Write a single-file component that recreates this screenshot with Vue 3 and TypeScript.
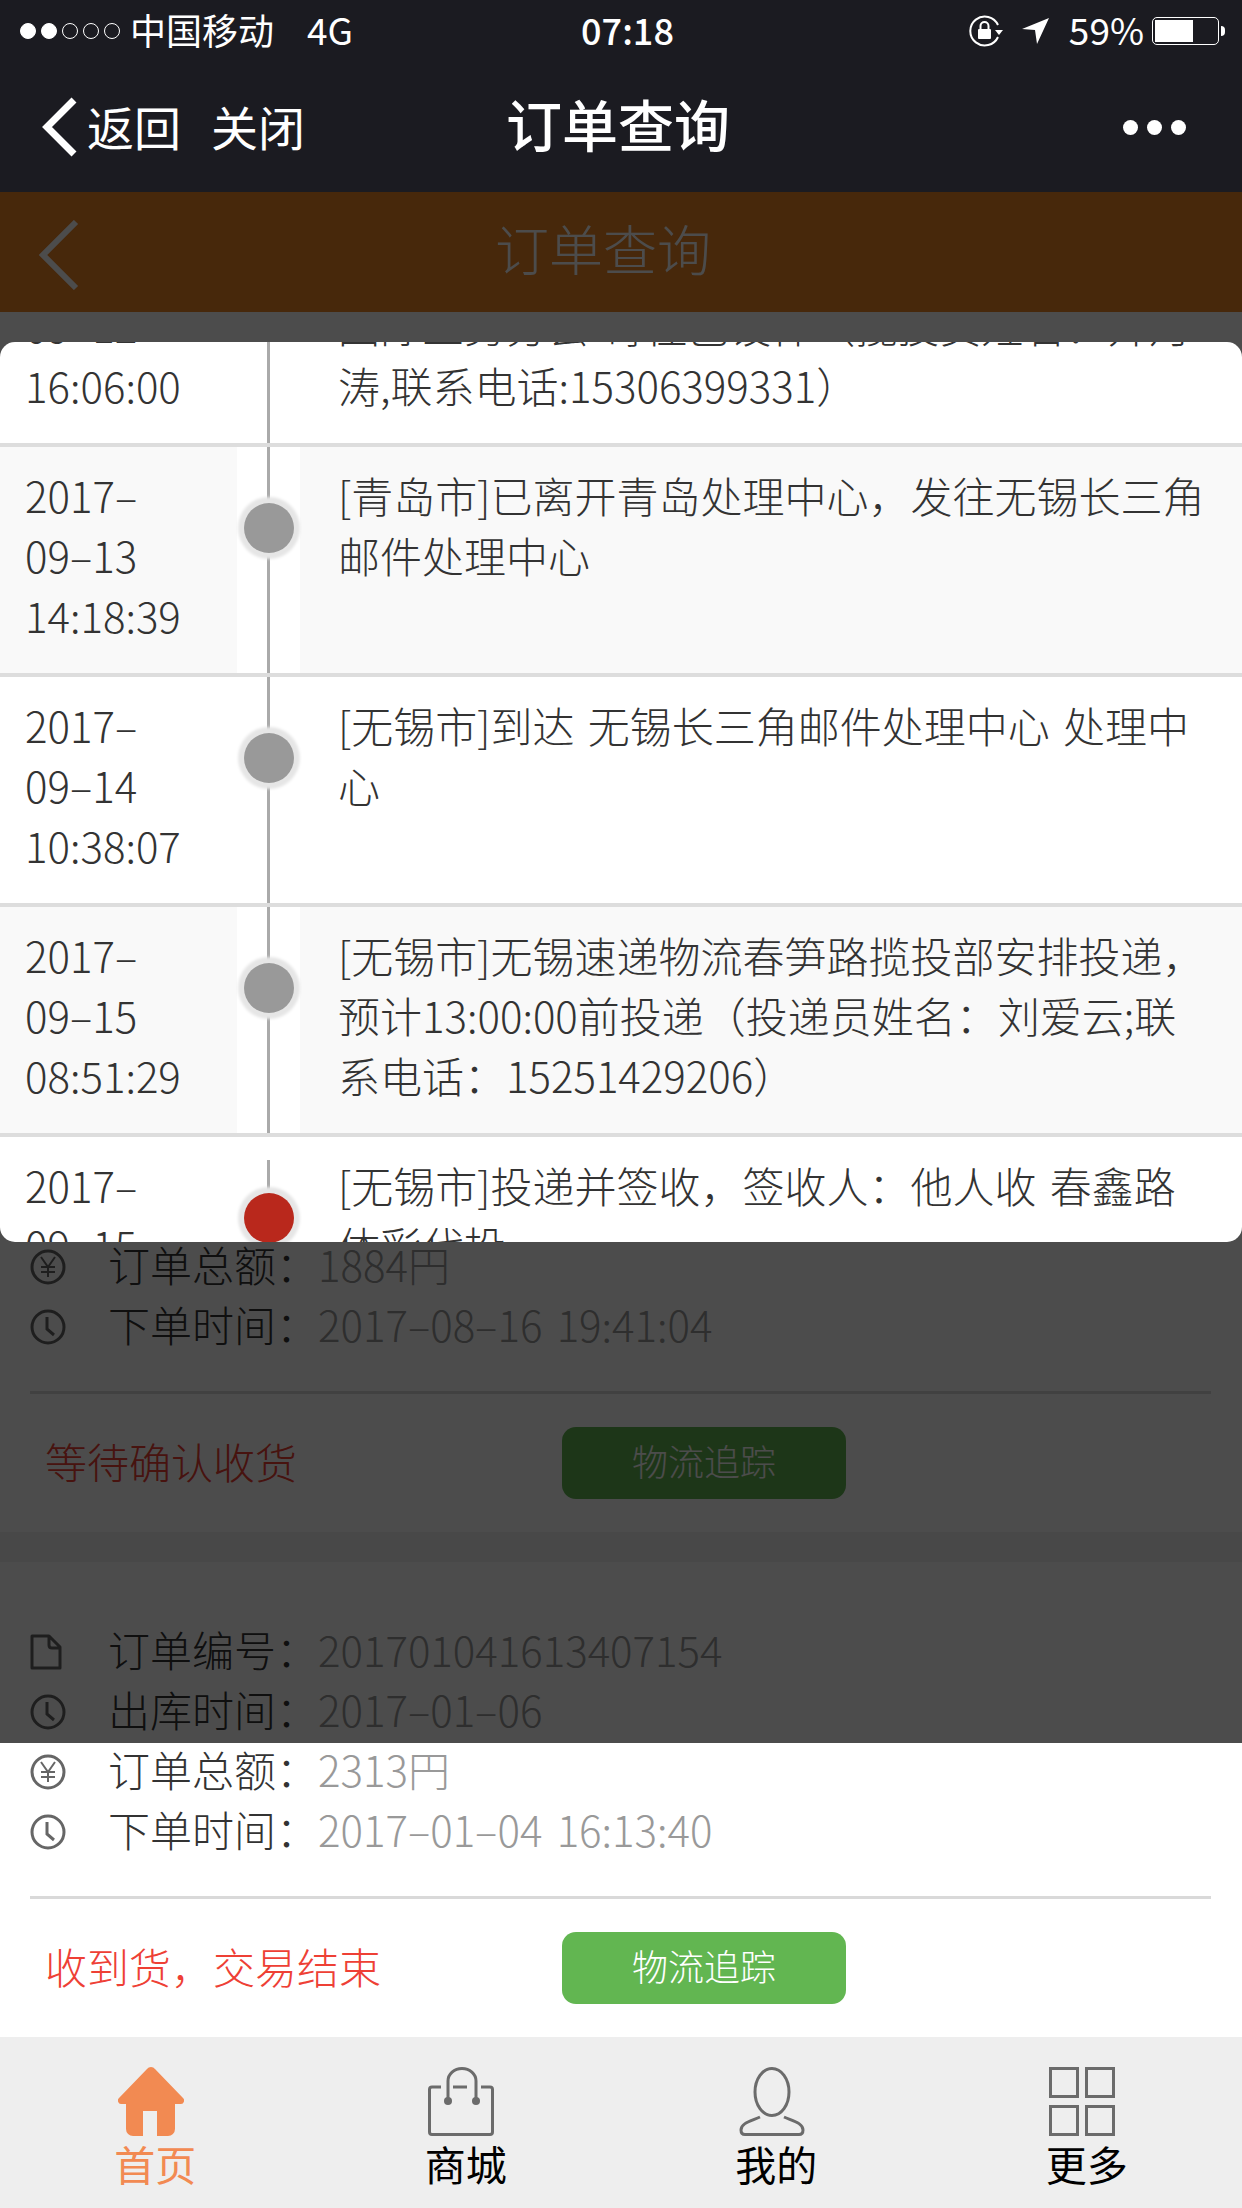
<template>
    <div id="page">
<!-- ================================ system bar ================================== -->
        <div class="status">
            <div class="statusLeft">
                <span v-for="n of 5" :key="n" :class="'sig ' + (n < 3 ? 'on' : '')"></span>
                <span class="carrier">中国移动</span>
                <span class="net">4G</span>
            </div>
            <div class="clock">07:18</div>
            <div class="statusRight">
                <svg class="lockIcon" width="34" height="32" viewBox="0 0 34 32">
                    <path d="M29 22A14.5 14.5 0 1 1 29 10" fill="none" stroke="#fff" stroke-width="2" />
                    <path d="M26 15h8l-4 5z" fill="#fff" />
                    <rect x="9" y="14" width="13" height="10" rx="1" fill="#fff" />
                    <path d="M11.5 14v-3a4 4 0 0 1 8 0v3" fill="none" stroke="#fff" stroke-width="2" />
                </svg>
                <svg class="arrowIcon" width="27" height="26" viewBox="0 0 27 26">
                    <path d="M0 11L27 0L15 26L13 12Z" fill="#fff" />
                </svg>
                <span class="pct">59%</span>
                <div class="battery"><div class="batteryFill"></div></div>
                <div class="batteryNub"></div>
            </div>
        </div>
<!-- ================================ webview title ================================ -->
        <div class="nav">
            <svg class="navBack" width="36" height="60" viewBox="0 0 36 60">
                <path d="M32 3L5 30L32 57" fill="none" stroke="#fff" stroke-width="7" />
            </svg>
            <span class="navLink first">返回</span>
            <span class="navLink">关闭</span>
            <div class="navTitle">订单查询</div>
            <div class="navMore"><i></i><i></i><i></i></div>
        </div>
<!-- ================================ page ========================================= -->
        <div class="head">
            <svg class="headBack" width="40" height="70" viewBox="0 0 40 70">
                <path d="M37 2L4 35L37 68" fill="none" stroke="#fff" stroke-width="6" />
            </svg>
            <div class="headTitle">订单查询</div>
        </div>

        <div class="orders">
            <div v-for="o of orders" :key="o.no" class="card">
                <div class="line">
                    <svg class="ico" width="36" height="36" viewBox="0 0 36 36">
                        <path d="M2 2H19L30 13V34H2Z M19 2V11q0 3 3 3H30" fill="none" stroke="#666" stroke-width="3" stroke-linejoin="round" />
                    </svg>
                    <span class="lbl">订单编号：</span><span class="val">{{ o.no }}</span>
                </div>
                <div class="line">
                    <svg class="ico" width="36" height="36" viewBox="0 0 36 36">
                        <circle cx="18" cy="18" r="16" fill="none" stroke="#666" stroke-width="3" />
                        <path d="M17 8V20L24 26" fill="none" stroke="#666" stroke-width="3" />
                    </svg>
                    <span class="lbl">出库时间：</span><span class="val">{{ o.out }}</span>
                </div>
                <div class="line">
                    <svg class="ico" width="36" height="36" viewBox="0 0 36 36">
                        <circle cx="18" cy="18" r="16" fill="none" stroke="#666" stroke-width="3" />
                        <path d="M11 8L18 18L25 8M18 18V28M11 18H25M11 23H25" fill="none" stroke="#666" stroke-width="2" />
                    </svg>
                    <span class="lbl">订单总额：</span><span class="val">{{ o.total }}円</span>
                </div>
                <div class="line">
                    <svg class="ico" width="36" height="36" viewBox="0 0 36 36">
                        <circle cx="18" cy="18" r="16" fill="none" stroke="#666" stroke-width="3" />
                        <path d="M17 8V20L24 26" fill="none" stroke="#666" stroke-width="3" />
                    </svg>
                    <span class="lbl">下单时间：</span><span class="val">{{ o.time }}</span>
                </div>
                <div class="rule"></div>
                <div class="foot">
                    <div class="state">{{ o.state }}</div>
                    <div class="track">物流追踪</div>
                </div>
            </div>
        </div>

        <div class="tabs">
            <div class="tab active">
                <svg width="66" height="69" viewBox="0 0 66 69">
                    <path d="M29 2a5 5 0 0 1 8 0L65 31a3.5 3.5 0 0 1-2 6H57V62a7 7 0 0 1-7 7H39V44H25V69H15a7 7 0 0 1-7-7V37H3a3.5 3.5 0 0 1-2-6Z" fill="#f28a52" />
                </svg>
                <span>首页</span>
            </div>
            <div class="tab">
                <svg width="66" height="69" viewBox="0 0 66 69">
                    <path d="M13 20H4q-2.500 0-2.500 2.500V65q0 2.500 2.500 2.500H62q2.500 0 2.500-2.500V22.500q0-2.500-2.500-2.500H53M25 20H39M20 34V14a14 12.500 0 0 1 28 0V34" fill="none" stroke="#6b6b6b" stroke-width="3" />
                    <circle cx="20" cy="34" r="4" fill="#6b6b6b" />
                    <circle cx="48" cy="34" r="4" fill="#6b6b6b" />
                </svg>
                <span>商城</span>
            </div>
            <div class="tab">
                <svg width="66" height="69" viewBox="0 0 66 69">
                    <ellipse cx="33" cy="25" rx="17" ry="23.500" fill="none" stroke="#6b6b6b" stroke-width="3" />
                    <path d="M21 50C12 54 2 56 2 63Q2 67.500 6 67.500H60Q64 67.500 64 63C64 56 54 54 45 50" fill="none" stroke="#6b6b6b" stroke-width="3" />
                </svg>
                <span>我的</span>
            </div>
            <div class="tab">
                <svg width="66" height="69" viewBox="0 0 66 69">
                    <g fill="none" stroke="#6b6b6b" stroke-width="3">
                        <rect x="1.500" y="1.500" width="27" height="28" />
                        <rect x="37.500" y="1.500" width="27" height="28" />
                        <rect x="1.500" y="39.500" width="27" height="28" />
                        <rect x="37.500" y="39.500" width="27" height="28" />
                    </g>
                </svg>
                <span>更多</span>
            </div>
        </div>
<!-- ================================ tracking popup =============================== -->
        <div class="mask"></div>
        <div ref="popup" class="popup">
            <div v-for="(s,i) of steps" :key="i" :class="'step ' + (i % 2 ? 'alt' : '')">
                <div class="when">
                    <div v-for="t of s.when" :key="t">{{ t }}</div>
                </div>
                <div :class="'rail ' + (i === steps.length - 1 ? 'last' : '')">
                    <div :class="'dot ' + (i === steps.length - 1 ? 'now' : '')" v-if="i > 0"></div>
                </div>
                <div class="what">{{ s.what }}</div>
            </div>
        </div>
    </div>
</template>

<script setup lang="ts">

import { onMounted, ref } from 'vue'

// -- =====================================================================================

    const popup = ref<HTMLElement>( {} as HTMLElement )

    const orders = [
        { no: "201708161941047733", out: "2017–08–17", total: 1884, time: "2017–08–16 19:41:04", state: "等待确认收货" },
        { no: "201701041613407154", out: "2017–01–06", total: 2313, time: "2017–01–04 16:13:40", state: "收到货，交易结束" }
    ]

    const steps = [
        {
            when: [ "2017–", "09–12", "16:06:00" ],
            what: "[青岛市]中国邮政速递物流股份有限公司青岛市国际业务分会 寄往巴设件（揽投员姓名：开月涛,联系电话:15306399331）"
        },
        {
            when: [ "2017–", "09–13", "14:18:39" ],
            what: "[青岛市]已离开青岛处理中心，发往无锡长三角邮件处理中心"
        },
        {
            when: [ "2017–", "09–14", "10:38:07" ],
            what: "[无锡市]到达 无锡长三角邮件处理中心 处理中心"
        },
        {
            when: [ "2017–", "09–15", "08:51:29" ],
            what: "[无锡市]无锡速递物流春笋路揽投部安排投递，预计13:00:00前投递（投递员姓名：刘爱云;联系电话：15251429206）"
        },
        {
            when: [ "2017–", "09–15", "12:20:11" ],
            what: "[无锡市]投递并签收，签收人：他人收 春鑫路体彩代投"
        }
    ]

// -- =====================================================================================

    // .. the list opens scrolled a little past its first entry
    onMounted( () => {
        popup.value.scrollTop = 125
    } )

// -- =====================================================================================

</script>

<style>
    html, body { margin: 0; background: #fff; }
</style>

<style scoped>

    #page {
        position: relative;
        width: 1242px;
        height: 2208px;
        overflow: hidden;
        display: flex;
        flex-direction: column;
        background: #fff;
        font-family: "Noto Sans CJK SC", "Liberation Sans", sans-serif;
        font-weight: 300;
        font-size: 42px;
        color: #333;
    }

    .status {
        height: 62px;
        flex-shrink: 0;
        display: grid;
        grid-template-columns: 1fr auto 1fr;
        align-items: center;
        padding: 0 17px 0 20px;
        background: #1b1b21;
        color: #fff;
        font-size: 36px;
        font-weight: 400;
    }

    .statusLeft, .statusRight {
        display: flex;
        align-items: center;
    }

    .statusRight { justify-content: flex-end; }

    .sig {
        width: 16px;
        height: 16px;
        margin-right: 5px;
        border: 1.500px solid #fff;
        border-radius: 50%;
        box-sizing: border-box;
    }

    .sig.on { background: #fff; }

    .carrier { margin: -5px 0 0 5px; }
    .net { margin: -5px 0 0 33px; font-size: 37px; }

    .clock {
        font-weight: 500;
        margin: -5px 0 0 10px;
    }

    .lockIcon { margin: 0 19px 0 0; }
    .arrowIcon { margin-right: 20px; }
    .pct { margin: -5px 8px 0 0; font-size: 37px; }

    .battery {
        width: 67px;
        height: 28px;
        padding: 2px;
        border: 1.500px solid #fff;
        border-radius: 5px;
        box-sizing: border-box;
    }

    .batteryFill {
        width: 38px;
        height: 100%;
        background: #fff;
    }

    .batteryNub {
        width: 4px;
        height: 10px;
        margin-left: 2px;
        border-radius: 0 4px 4px 0;
        background: #fff;
    }

    .nav {
        position: relative;
        height: 130px;
        flex-shrink: 0;
        display: flex;
        align-items: center;
        padding-left: 42px;
        background: #1b1b21;
        color: #fff;
        font-weight: 400;
    }

    .navBack { margin-right: 9px; }

    .navLink {
        font-size: 47px;
        margin: -4px 30px 0 0;
        line-height: 1;
    }

    .navTitle {
        position: absolute;
        left: 0;
        right: 6px;
        top: 33px;
        text-align: center;
        font-size: 56px;
        font-weight: 500;
        line-height: 1;
    }

    .navMore {
        position: absolute;
        right: 56px;
        display: flex;
        gap: 9px;
    }

    .navMore i {
        width: 15px;
        height: 15px;
        border-radius: 50%;
        background: #fff;
    }

    .head {
        position: relative;
        height: 120px;
        flex-shrink: 0;
        display: flex;
        align-items: center;
        padding-left: 39px;
        background: #ed8525;
        color: #fff;
    }

    .headBack { margin-top: 6px; }

    .headTitle {
        position: absolute;
        left: 0;
        right: 36px;
        top: 29px;
        text-align: center;
        font-size: 54px;
        line-height: 1;
    }

    .orders {
        flex: 1;
        min-height: 0;
        display: flex;
        flex-direction: column;
        justify-content: flex-end;
        overflow: hidden;
    }

    .card {
        flex-shrink: 0;
        padding: 60px 31px 33px 30px;
    }

    .card + .card { border-top: 30px solid #f0f0f0; }

    .line {
        height: 60px;
        display: flex;
        align-items: center;
        line-height: 60px;
    }

    .ico {
        flex-shrink: 0;
        margin-right: 42px;
    }

    .lbl { width: 210px; flex-shrink: 0; margin-top: -6px; }
    .val { color: #999; margin-top: -6px; word-spacing: 5px; }

    .rule {
        height: 3px;
        margin-top: 34px;
        background: #d9d9d9;
    }

    .foot {
        display: flex;
        align-items: center;
        margin-top: 33px;
    }

    .state {
        width: 532px;
        box-sizing: border-box;
        padding: 0 0 6px 15px;
        color: #ee4035;
    }

    .track {
        width: 284px;
        height: 72px;
        border-radius: 14px;
        background: #62b651;
        color: #fff;
        font-size: 36px;
        line-height: 67px;
        text-align: center;
    }

    .tabs {
        height: 171px;
        flex-shrink: 0;
        display: grid;
        grid-template-columns: repeat(4, 1fr);
        background: #eeeeee;
        color: #000;
        font-size: 41px;
        font-weight: 400;
    }

    .tab {
        display: flex;
        flex-direction: column;
        align-items: center;
        padding-top: 30px;
    }

    .tab svg { margin-right: 9px; }

    .tab span {
        line-height: 50px;
        margin-top: 2px;
    }

    .tab.active { color: #f28a52; }

    .mask {
        position: absolute;
        top: 192px;
        left: 0;
        right: 0;
        height: 1551px;
        background: rgba(0, 0, 0, .7);
    }

    .popup {
        position: absolute;
        top: 342px;
        left: 0;
        right: 0;
        height: 900px;
        overflow-y: auto;
        scrollbar-width: none;
        border-radius: 15px;
        background: #fff;
    }

    .step {
        height: 226px;
        display: grid;
        grid-template-columns: 237px 63px 1fr;
        border-bottom: 4px solid #ddd;
        line-height: 60px;
    }

    .step:last-child { border-bottom: 0; }

    .when {
        padding: 18px 0 0 25px;
        white-space: nowrap;
    }

    .what {
        padding: 18px 29px 0 38px;
        word-spacing: 4px;
    }

    .alt .when, .alt .what { background: #f9f9f9; }

    .rail {
        position: relative;
        display: flex;
        justify-content: center;
    }

    /* rail line, runs behind the dot */
    .rail::before {
        content: "";
        position: absolute;
        top: 0;
        bottom: 0;
        left: 30px;
        width: 3px;
        background: #aaa;
    }

    .rail.last::before { top: 23px; }

    .dot {
        position: relative;
        width: 50px;
        height: 50px;
        margin-top: 56px;
        border-radius: 50%;
        background: #999;
        box-shadow: 0 0 3px 6px #e6e6e6;
    }

    .dot.now { background: #b9281c; }

</style>
